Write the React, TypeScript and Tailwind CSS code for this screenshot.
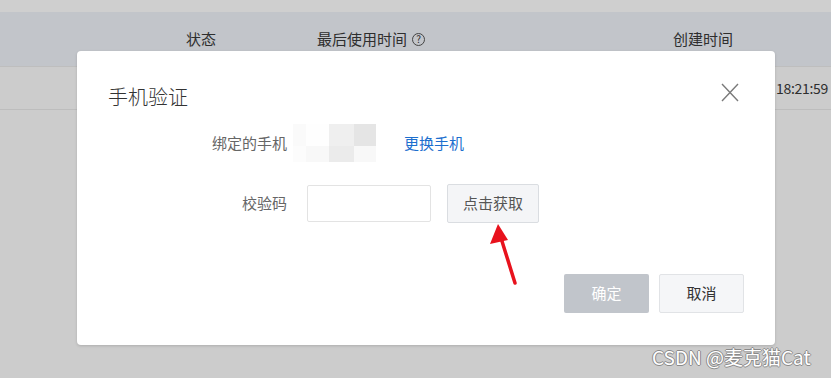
const font = { fontFamily: '"Microsoft YaHei", "Noto Sans CJK SC", "Noto Sans", sans-serif' };

// pixelated block hiding the phone number
const mosaic = [
  ["#fafafa", "#fefefe", "#efefef", "#e5e5e5"],
  ["#fcfcfc", "#f8f8f8", "#ebebeb", "#f8f8f8"],
];

function Mosaic() {
  return (
    <div className="grid grid-cols-[13px_23px_25px_22px] grid-rows-[22px_16px]">
      {mosaic.flat().map((c, i) => (
        <div key={i} style={{ background: c }} />
      ))}
    </div>
  );
}

export default function App() {
  return (
    <div
      className="relative h-[378px] w-[831px] overflow-hidden bg-[#cccccc] text-[15px] text-[#2e2e2e]"
      style={font}
    >
      {/* table behind the overlay */}
      <div className="h-[12px] bg-[#cfcfcf]" />
      <div className="flex h-[55px] items-center border-b border-[#bebebe] bg-[#c2c5ca] pl-[186px]">
        <div className="w-[131px]">状态</div>
        <div className="flex w-[356px] items-center gap-[5px]">
          <span>最后使用时间</span>
          <span className="flex h-[13px] w-[13px] items-center justify-center rounded-full border border-[#444] text-[10px] leading-none">
            ?
          </span>
        </div>
        <div>创建时间</div>
      </div>
      <div className="flex h-[43px] items-center border-b border-[#bdbdbd] pl-[776px] text-[14px] tracking-[-0.3px]">
        18:21:59
      </div>

      {/* dialog */}
      <div className="absolute left-[77px] top-[51px] w-[698px] rounded-[4px] bg-white px-[31px] pb-[32px] pt-[32px] shadow-[0_1px_3px_rgba(0,0,0,0.15)]">
        <div className="flex h-[28px] items-center justify-between">
          <h2 className="text-[20px] font-light text-[#333]">手机验证</h2>
          <svg className="mr-[5px] self-start" width="18" height="19" viewBox="0 0 18 19">
            <path d="M1 1 L17 18 M17 1 L1 18" stroke="#7a7a7a" strokeWidth="1.4" fill="none" />
          </svg>
        </div>

        <div className="mt-[13px] flex h-[38px] items-center">
          <div className="w-[179px] text-right text-[#666]">绑定的手机</div>
          <div className="ml-[6px]">
            <Mosaic />
          </div>
          <a className="ml-[28px] cursor-pointer text-[#1d6fce]">更换手机</a>
        </div>

        <div className="mt-[22px] flex h-[39px] items-center">
          <div className="w-[179px] text-right text-[#666]">校验码</div>
          <input className="ml-[20px] h-[37px] w-[124px] rounded-[2px] border border-[#e3e3e3] px-2 outline-none" />
          <button className="ml-[16px] h-[39px] w-[92px] rounded-[2px] border border-[#dadde1] bg-[#f4f5f7] text-[#555]">
            点击获取
          </button>
        </div>

        <div className="mt-[51px] flex justify-end gap-[10px]">
          <button className="h-[39px] w-[85px] rounded-[2px] bg-[#c1c5cb] text-white">确定</button>
          <button className="h-[39px] w-[85px] rounded-[2px] border border-[#e1e3e6] bg-[#f5f6f8] text-[#333]">
            取消
          </button>
        </div>
      </div>

      {/* red annotation arrow */}
      <svg className="absolute left-[480px] top-[220px]" width="50" height="70" viewBox="0 0 50 70">
        <line x1="35" y1="63" x2="21" y2="18" stroke="#e8121d" strokeWidth="3.5" strokeLinecap="round" />
        <polygon points="18,4 10,24 28,20" fill="#e8121d" />
      </svg>

      {/* watermark */}
      <div className="absolute left-[652px] top-[345px] text-[19px] leading-[24px] text-white [text-shadow:1px_0_0_#8a8a8a,-1px_0_0_#8a8a8a,0_1px_0_#8a8a8a,0_-1px_0_#8a8a8a]">
        CSDN @麦克猫Cat
      </div>
    </div>
  );
}
